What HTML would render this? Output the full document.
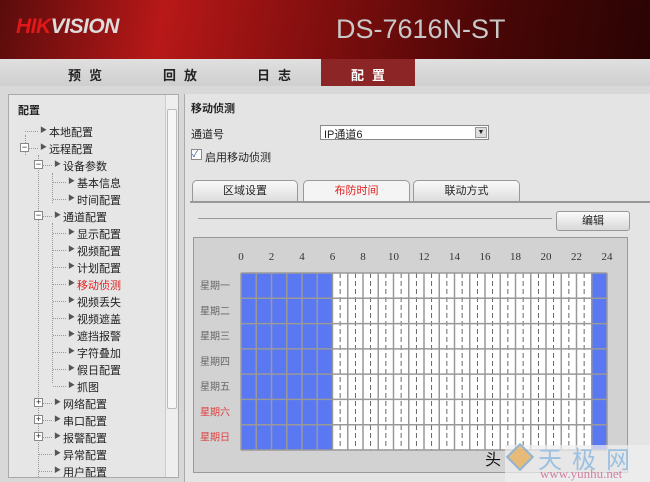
<!DOCTYPE html>
<html><head><meta charset="utf-8"><style>
*{margin:0;padding:0;box-sizing:border-box}
body{width:650px;height:482px;overflow:hidden;background:#d8d8d8;font-family:"Liberation Sans","Noto Sans CJK SC",sans-serif;font-size:11px;color:#222;position:relative}
.hdr{position:absolute;left:0;top:0;width:650px;height:59px;background:linear-gradient(100deg,#5a0c0c 0%,#b81818 25%,#8a1010 45%,#4a0606 75%,#2a0404 100%)}
.logo{position:absolute;left:16px;top:15px;font-size:21px;font-weight:bold;font-style:italic;color:#ddd;letter-spacing:-0.5px}
.logo b{color:#e01818}
.model{position:absolute;left:336px;top:14px;font-size:27px;color:#c8c8c8}
.nav{position:absolute;left:0;top:59px;width:650px;height:27px;background:linear-gradient(#e0e0e0,#cfcfcf)}
.nav span{position:absolute;top:6px;font-size:13px;font-weight:bold;letter-spacing:8px;color:#222}
.nav .act{position:absolute;left:321px;top:0;width:94px;height:27px;background:#8c2626}
.left{position:absolute;left:8px;top:94px;width:171px;height:384px;background:#e6e6e6;border:1px solid #aaa;overflow:hidden}
.sb{position:absolute;right:0;top:0;width:13px;height:382px;background:#eee;border-left:1px solid #ccc;z-index:2}
.sb i{position:absolute;left:1px;top:14px;width:10px;height:300px;background:#f6f6f6;border:1px solid #bbb;border-radius:2px}
.t{position:absolute;white-space:nowrap;font-size:11px}
.main{position:absolute;left:184px;top:94px;width:466px;height:388px;background:#e4e4e4;border-left:1px solid #aaa}
.tab{position:absolute;top:180px;height:22px;border:1px solid #999;border-bottom:none;border-radius:5px 5px 0 0;background:linear-gradient(#fafafa,#dcdcdc);text-align:center;line-height:21px}
.panel{position:absolute;left:193px;top:237px;width:435px;height:236px;background:#d2d2d2;border:1px solid #999}
</style></head><body>
<div class="hdr"><div class="logo"><b>HIK</b>VISION</div><div class="model">DS-7616N-ST</div></div>
<div class="nav"><div class="act"></div>
<span style="left:68px">预览</span><span style="left:163px">回放</span><span style="left:257px">日志</span><span style="left:351px;color:#fff">配置</span></div>

<div class="left"><div class="sb"><i></i></div>
<div class="t" style="left:9px;top:7px;font-weight:bold">配置</div>
<div id="tree"></div>
</div>

<div class="main">
<div class="t" style="left:6px;top:6px;font-weight:bold">移动侦测</div>
<div class="t" style="left:6px;top:32px">通道号</div>
<div style="position:absolute;left:135px;top:31px;width:169px;height:15px;background:#fff;border:1px solid #888"><span class="t" style="left:3px;top:0">IP通道6</span><div style="position:absolute;right:1px;top:1px;width:12px;height:11px;background:#ddd;border:1px solid #999;font-size:7px;text-align:center;line-height:10px">▼</div></div>
<div style="position:absolute;left:6px;top:55px;width:11px;height:11px;background:#fff;border:1px solid #888;font-size:9px;line-height:9px;color:#35a">✓</div>
<div class="t" style="left:20px;top:55px">启用移动侦测</div>
</div>
<div class="tab" style="left:192px;width:106px">区域设置</div>
<div class="tab" style="left:303px;width:107px;background:#f4f4f4;color:#e02020">布防时间</div>
<div class="tab" style="left:413px;width:107px">联动方式</div>
<div style="position:absolute;left:190px;top:201px;width:460px;height:2px;background:#999"></div>
<div style="position:absolute;left:198px;top:218px;width:354px;height:1px;background:#999"></div>
<div style="position:absolute;left:556px;top:211px;width:74px;height:20px;border:1px solid #999;border-radius:3px;background:linear-gradient(#fafafa,#d8d8d8);text-align:center;line-height:19px">编辑</div>
<div class="panel"></div>
<svg id="g" style="position:absolute;left:0;top:0" width="650" height="482"></svg>
<div style="position:absolute;left:505px;top:445px;width:145px;height:37px;background:rgba(240,240,240,0.7)"></div>
<div style="position:absolute;left:510px;top:447px;width:20px;height:20px;transform:rotate(45deg);border:2px solid #7aa8d0;background:#e8b060;opacity:.8"></div>
<div class="t" style="left:538px;top:440px;font-size:24px;color:#9cc0e0;letter-spacing:10px">天极网</div>
<div class="t" style="left:540px;top:466px;font-size:13px;color:#d080a0;font-family:'Liberation Serif',serif">www.yunhu.net</div>
<div class="t" style="left:485px;top:446px;font-size:16px;color:#111">头</div>
<script>
var s='',X=241,Y=273,W=366/24,H=177/7;
s+='<rect x="'+X+'" y="'+Y+'" width="366" height="177" fill="#fff"/>';
s+='<rect x="'+X+'" y="'+Y+'" width="'+(6*W)+'" height="177" fill="#5a78f2"/>';
s+='<rect x="'+(X+23*W)+'" y="'+Y+'" width="'+W+'" height="177" fill="#5a78f2"/>';
for(var i=6;i<23;i++){var m=X+i*W+W/2;s+='<line x1="'+m+'" y1="'+Y+'" x2="'+m+'" y2="'+(Y+177)+'" stroke="#444" stroke-width="0.8" stroke-dasharray="5,3"/>';}
for(var i=0;i<=24;i++){var x=X+i*W;s+='<line x1="'+x+'" y1="'+Y+'" x2="'+x+'" y2="'+(Y+177)+'" stroke="#999" stroke-width="1.5"/>';
if(i%2==0)s+='<text x="'+x+'" y="260" font-size="11" fill="#333" text-anchor="middle" font-family="Liberation Serif,serif">'+i+'</text>';}
for(var j=0;j<=7;j++){var y=Y+j*H;s+='<line x1="'+X+'" y1="'+y+'" x2="'+(X+366)+'" y2="'+y+'" stroke="#999" stroke-width="1.5"/>';}
var d=['一','二','三','四','五','六','日'];
for(var j=0;j<7;j++)s+='<text x="200" y="'+(Y+j*H+16)+'" font-size="10" fill="'+(j>4?'#e04040':'#666')+'" font-family="Noto Sans CJK SC,sans-serif">星期'+d[j]+'</text>';
document.getElementById('g').innerHTML=s;
var items=[[0,'本地配置',0],[0,'远程配置',1],[1,'设备参数',1],[2,'基本信息',0],[2,'时间配置',0],[1,'通道配置',1],[2,'显示配置',0],[2,'视频配置',0],[2,'计划配置',0],[2,'移动侦测',0,1],[2,'视频丢失',0],[2,'视频遮盖',0],[2,'遮挡报警',0],[2,'字符叠加',0],[2,'假日配置',0],[2,'抓图',0],[1,'网络配置',2],[1,'串口配置',2],[1,'报警配置',2],[1,'异常配置',0],[1,'用户配置',0]];
var h='';
h+='<div style="position:absolute;left:16px;top:40px;height:20px;border-left:1px dotted #999"></div>';
h+='<div style="position:absolute;left:29px;top:60px;height:330px;border-left:1px dotted #999"></div>';
h+='<div style="position:absolute;left:43px;top:78px;height:30px;border-left:1px dotted #999"></div>';
h+='<div style="position:absolute;left:43px;top:128px;height:160px;border-left:1px dotted #999"></div>';
for(var k=0;k<items.length;k++){var it=items[k],y=29+k*17,x=31+it[0]*14;
h+='<div style="position:absolute;left:'+(x-15)+'px;top:'+(y+7)+'px;width:13px;border-top:1px dotted #999"></div>';
if(it[2])h+='<div class="t" style="left:'+(x-20)+'px;top:'+(y+2)+'px;width:9px;height:9px;border:1px solid #888;background:#fff;font-size:9px;line-height:7px;text-align:center">'+(it[2]==1?'−':'+')+'</div>';
h+='<div class="t" style="left:'+x+'px;top:'+y+'px;font-size:7px;color:#555;line-height:14px">▶</div>';
h+='<div class="t" style="left:'+(x+9)+'px;top:'+y+'px;color:'+(it[3]?'#e02020':'#222')+'">'+it[1]+'</div>';}
document.getElementById('tree').innerHTML=h;
</script>
</body></html>
